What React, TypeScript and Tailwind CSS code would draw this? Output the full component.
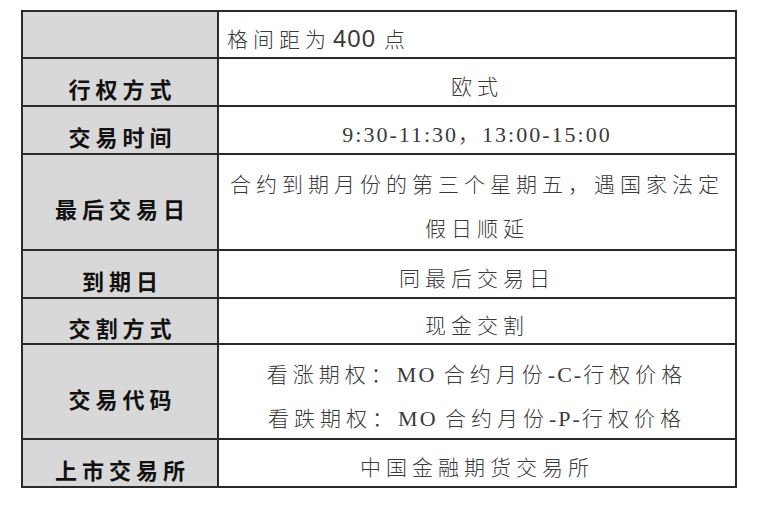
import React from 'react';

type Row = {
  label: string;
  lines: React.ReactNode[];
  height: string;
  align?: 'left' | 'center';
};

const latin = "font-['Liberation_Serif','Noto_Sans_CJK_SC',serif] text-[22px] tracking-[2px]";

const rows: Row[] = [
  {
    label: '',
    lines: [
      <>
        格间距为
        <span className="ml-[2px] font-['Liberation_Sans',sans-serif] text-[24px] tracking-[1px]">400</span>
        <span className="ml-[8px]">点</span>
      </>,
    ],
    height: 'h-[47px]',
    align: 'left',
  },
  { label: '行权方式', lines: ['欧式'], height: 'h-[48px]' },
  { label: '交易时间', lines: [<span className={latin}>9:30-11:30，13:00-15:00</span>], height: 'h-[48px]' },
  { label: '最后交易日', lines: ['合约到期月份的第三个星期五，遇国家法定', '假日顺延'], height: 'h-[96px]' },
  { label: '到期日', lines: ['同最后交易日'], height: 'h-[48px]' },
  { label: '交割方式', lines: ['现金交割'], height: 'h-[46px]' },
  {
    label: '交易代码',
    lines: [
      <>看涨期权：<span className={latin}>MO </span>合约月份<span className={latin}>-C-</span>行权价格</>,
      <>看跌期权：<span className={latin}>MO </span>合约月份<span className={latin}>-P-</span>行权价格</>,
    ],
    height: 'h-[95px]',
  },
  { label: '上市交易所', lines: ['中国金融期货交易所'], height: 'h-[46px]' },
];

const App: React.FC = () => {
  return (
    <div className="w-[768px] h-[510px] bg-white pt-[10px] pl-[21px]">
      <div className="w-[716px] border-2 border-[#2a2a2a] flex flex-col">
        {rows.map((row, i) => (
          <div
            key={i}
            className={
              'flex ' + row.height + (i < rows.length - 1 ? ' border-b-2 border-[#2a2a2a]' : '')
            }
          >
            <div className="w-[196px] shrink-0 bg-[#d8d8d8] border-r-2 border-[#2a2a2a] flex items-center justify-center pt-[12px]">
              <span className="font-['Noto_Sans_CJK_SC',sans-serif] font-bold text-[22px] leading-[28px] tracking-[5px] text-[#111] pl-[5px]">
                {row.label}
              </span>
            </div>
            <div
              className={
                'flex-1 flex flex-col justify-center pt-[10px] ' +
                (row.align === 'left' ? 'items-start pl-[8px]' : 'items-center')
              }
            >
              {row.lines.map((line, j) => (
                <div
                  key={j}
                  className={
                    "font-['Liberation_Serif','Noto_Sans_CJK_SC',serif] font-light text-[21px] tracking-[5px] text-[#3a3a3a] whitespace-nowrap " +
                    (row.lines.length > 1 ? 'leading-[44px]' : 'leading-[28px]')
                  }
                >
                  {line}
                </div>
              ))}
            </div>
          </div>
        ))}
      </div>
    </div>
  );
};

export default App;
